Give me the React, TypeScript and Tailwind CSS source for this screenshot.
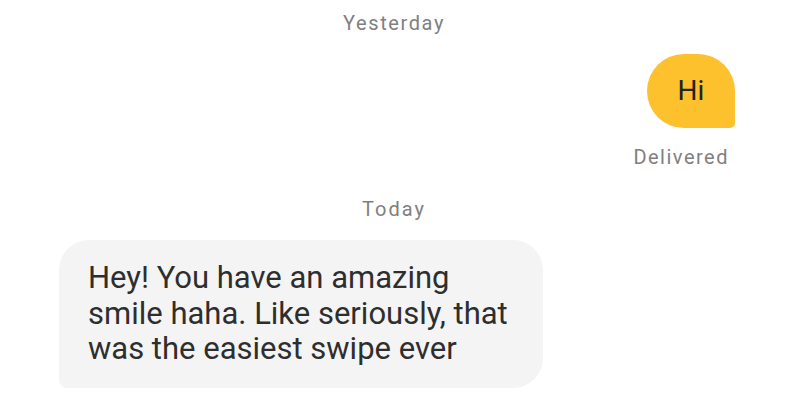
import React from "react";

const font = { fontFamily: "Roboto, 'Noto Sans', sans-serif" };

const Stamp = ({ label, className = "" }: { label: string; className?: string }) => (
  <p className={`text-center text-[20px] leading-none tracking-[1.6px] text-[#808080] ${className}`}>{label}</p>
);

const App = () => {
  return (
    <div className="w-[788px] h-[400px] overflow-hidden bg-white" style={font}>
      <Stamp label="Yesterday" className="pt-[13px]" />

      {/* sent */}
      <div className="flex flex-col items-end pr-[53px] mt-[21px]">
        <div className="w-[88px] h-[74px] flex items-center justify-center bg-[#fcc12d] rounded-[38px] rounded-br-[5px] text-[28px] text-[#222]">
          Hi
        </div>
        <p className="mt-[19px] mr-[6px] text-[20px] leading-none tracking-[1.5px] text-[#808080]">Delivered</p>
      </div>

      <Stamp label="Today" className="mt-[32px] tracking-[2px]" />

      {/* received */}
      <div className="mt-[21px] ml-[59px] w-[484px] h-[148px] bg-[#f4f4f4] rounded-[30px] rounded-bl-[8px] pl-[29px] pt-[20px]">
        <p className="text-[31px] leading-[35.5px] text-[#2e2e2e] w-[430px]">
          Hey! You have an amazing smile haha. Like seriously, that was the easiest swipe ever
        </p>
      </div>
    </div>
  );
};

export default App;
